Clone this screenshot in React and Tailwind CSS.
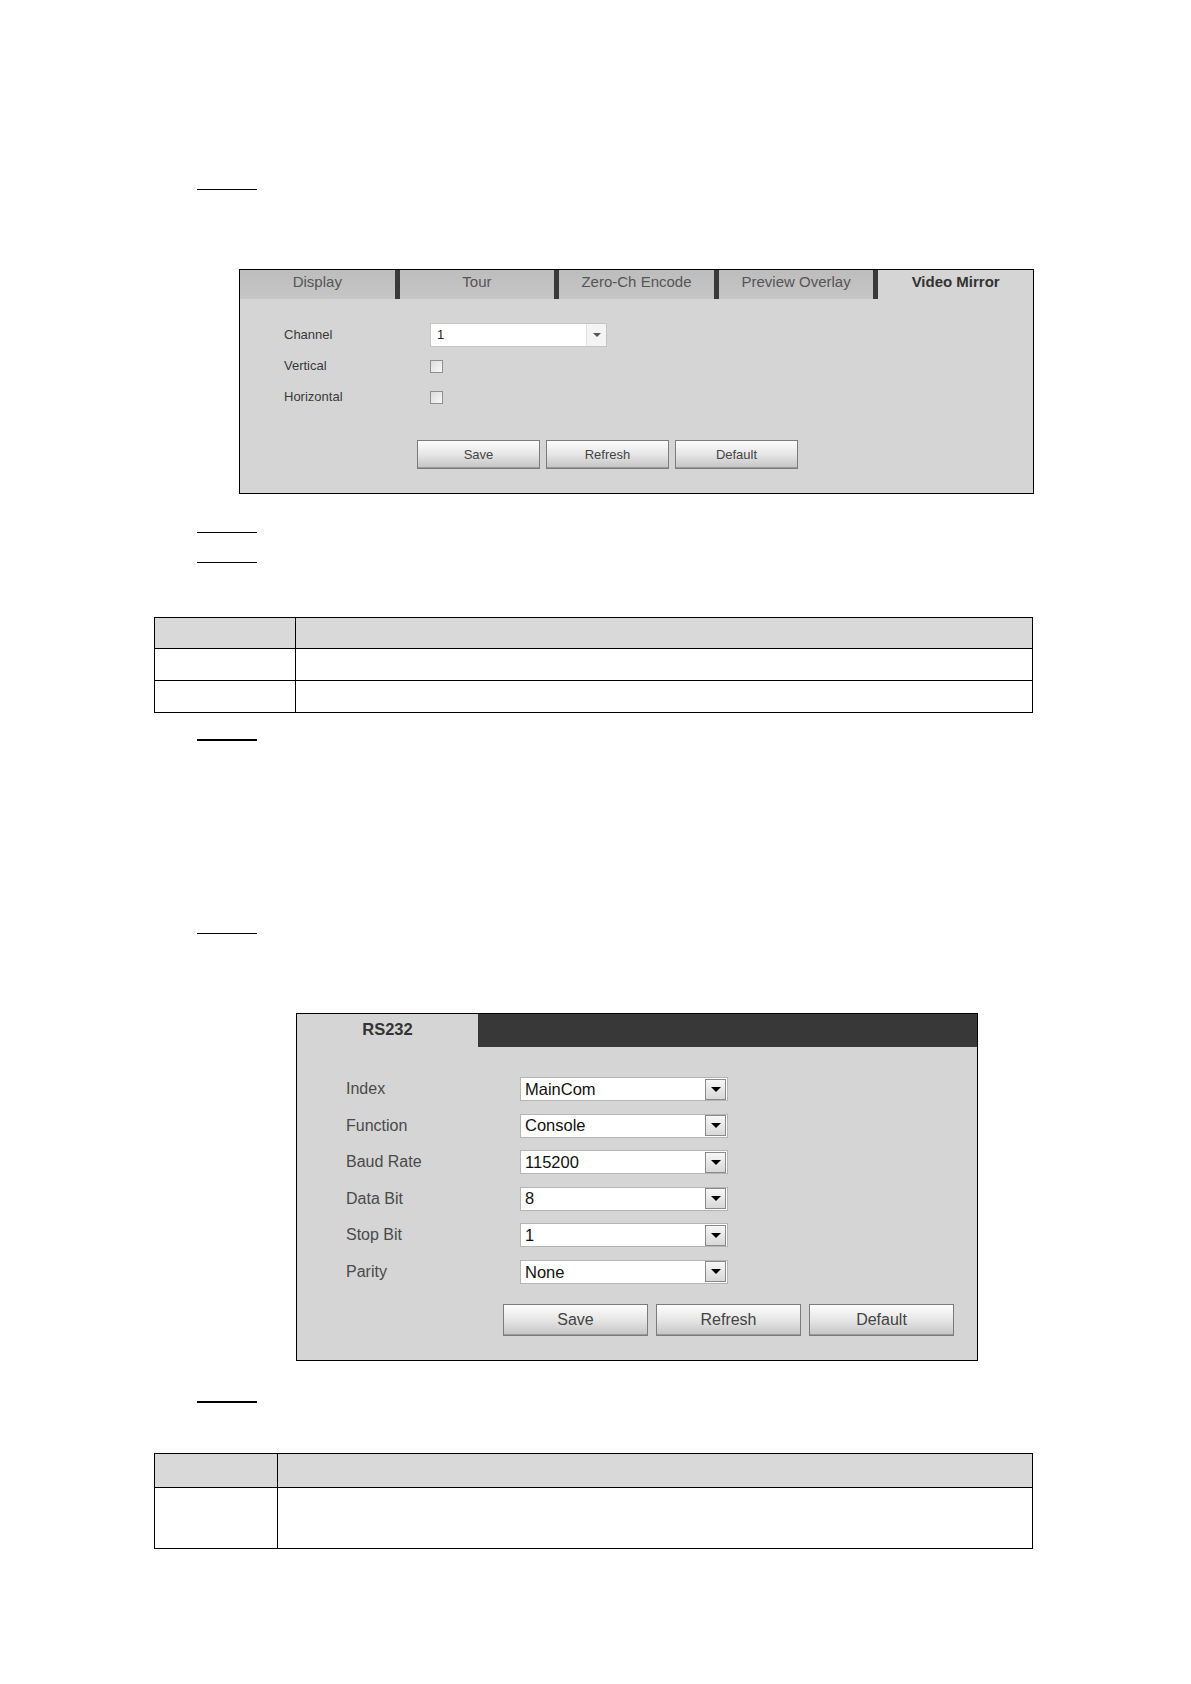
import React from "react";

const tabs = ["Display", "Tour", "Zero-Ch Encode", "Preview Overlay", "Video Mirror"];

const serialRows = [
  { label: "Index", value: "MainCom" },
  { label: "Function", value: "Console" },
  { label: "Baud Rate", value: "115200" },
  { label: "Data Bit", value: "8" },
  { label: "Stop Bit", value: "1" },
  { label: "Parity", value: "None" },
];

function Underline({ top, thick }) {
  return (
    <div
      className={`ml-[197px] w-[60px] bg-black ${thick ? "h-[2px]" : "h-px"}`}
      style={{ marginTop: top }}
    />
  );
}

function SmallSelect({ value }) {
  return (
    <div className="flex h-[24px] w-[177px] items-center border border-[#c4c4c4] bg-white">
      <span className="flex-1 pl-[6px] text-[13px] text-[#222]">{value}</span>
      <span className="flex h-full w-[20px] items-center justify-center border-l border-[#e2e2e2] bg-[#f4f4f4]">
        <span className="h-0 w-0 border-x-[4px] border-t-[4px] border-x-transparent border-t-[#555]" />
      </span>
    </div>
  );
}

function Checkbox() {
  return <div className="h-[13px] w-[13px] border border-[#8f8f8f] bg-gradient-to-br from-[#dcdcdc] to-[#f8f8f8]" />;
}

function WebButton({ children, big }) {
  return (
    <button
      className={`border border-[#7b7b7b] bg-gradient-to-b from-[#fdfdfd] via-[#e6e6e6] to-[#c4c4c4] text-[#444] shadow-[inset_0_-1px_0_#9a9a9a] ${
        big ? "h-[32px] w-[145px] text-[16px]" : "h-[29px] w-[123px] text-[13px]"
      }`}
    >
      {children}
    </button>
  );
}

function MirrorPanel() {
  return (
    <div className="ml-[239px] mt-[79px] h-[225px] w-[795px] border border-black bg-[#d5d5d5] font-['Liberation_Sans',Arial,sans-serif]">
      <div className="flex h-[29px]">
        {tabs.map((t, i) => {
          const active = i === tabs.length - 1;
          return (
            <div
              key={t}
              className={`flex flex-1 items-center justify-center text-[15px] ${
                i > 0 ? "border-l-[5px] border-[#3a3a3a]" : ""
              } ${active ? "bg-[#d5d5d5] font-bold text-[#333]" : "bg-gradient-to-b from-[#bdbdbd] to-[#c6c6c6] text-[#555]"}`}
            >
              <span className="-mt-[4px]">{t}</span>
            </div>
          );
        })}
      </div>
      <div className="ml-[44px] mt-[24px] grid grid-cols-[146px_1fr] gap-y-[7px] text-[13px] text-[#3a3a3a]">
        <div className="flex h-[24px] items-center">Channel</div>
        <SmallSelect value="1" />
        <div className="flex h-[24px] items-center">Vertical</div>
        <div className="flex h-[24px] items-center">
          <Checkbox />
        </div>
        <div className="flex h-[24px] items-center">Horizontal</div>
        <div className="flex h-[24px] items-center">
          <Checkbox />
        </div>
      </div>
      <div className="ml-[177px] mt-[31px] flex gap-[6px]">
        <WebButton>Save</WebButton>
        <WebButton>Refresh</WebButton>
        <WebButton>Default</WebButton>
      </div>
    </div>
  );
}

function BigSelect({ value }) {
  return (
    <div className="flex h-[24px] w-[208px] items-center border border-[#b5b5b5] bg-white">
      <span className="flex-1 pl-[4px] text-[16.5px] text-[#111]">{value}</span>
      <span className="mr-px flex h-[21px] w-[21px] items-center justify-center border border-[#8a8a8a] bg-gradient-to-b from-[#f7f7f7] to-[#d8d8d8]">
        <span className="h-0 w-0 border-x-[5px] border-t-[5px] border-x-transparent border-t-black" />
      </span>
    </div>
  );
}

function SerialPanel() {
  return (
    <div className="ml-[296px] mt-[79px] h-[348px] w-[682px] border border-black bg-[#d5d5d5] font-['Liberation_Sans',Arial,sans-serif]">
      <div className="flex h-[33px]">
        <div className="flex w-[181px] justify-center pt-[3px] text-[16.5px] font-bold text-[#333]">RS232</div>
        <div className="flex-1 bg-[#383838]" />
      </div>
      <div className="ml-[49px] mt-[30px] grid grid-cols-[174px_1fr] gap-y-[12.6px] text-[16px] text-[#4a4a4a]">
        {serialRows.map((r) => (
          <React.Fragment key={r.label}>
            <div className="flex h-[24px] items-center">{r.label}</div>
            <BigSelect value={r.value} />
          </React.Fragment>
        ))}
      </div>
      <div className="ml-[206px] mt-[20px] flex gap-[8px]">
        <WebButton big>Save</WebButton>
        <WebButton big>Refresh</WebButton>
        <WebButton big>Default</WebButton>
      </div>
    </div>
  );
}

function BlankTable({ top, firstCol, rows }) {
  return (
    <div
      className="ml-[154px] w-[879px] border-[1.5px] border-black"
      style={{ marginTop: top }}
    >
      {rows.map((h, i) => (
        <div
          key={i}
          className={`flex ${i > 0 ? "border-t-[1.5px] border-black" : "bg-[#d9d9d9]"}`}
          style={{ height: h }}
        >
          <div className="border-r-[1.5px] border-black" style={{ width: firstCol }} />
          <div className="flex-1" />
        </div>
      ))}
    </div>
  );
}

export default function App() {
  return (
    <div className="flow-root h-[1684px] w-[1191px] bg-white">
      <Underline top={189} />
      <MirrorPanel />
      <Underline top={38} />
      <Underline top={29} />
      <BlankTable top={54} firstCol={141} rows={[30, 32, 32]} />
      <Underline top={26} thick />
      <Underline top={192} />
      <SerialPanel />
      <Underline top={40} thick />
      <BlankTable top={50} firstCol={123} rows={[33, 61]} />
    </div>
  );
}
